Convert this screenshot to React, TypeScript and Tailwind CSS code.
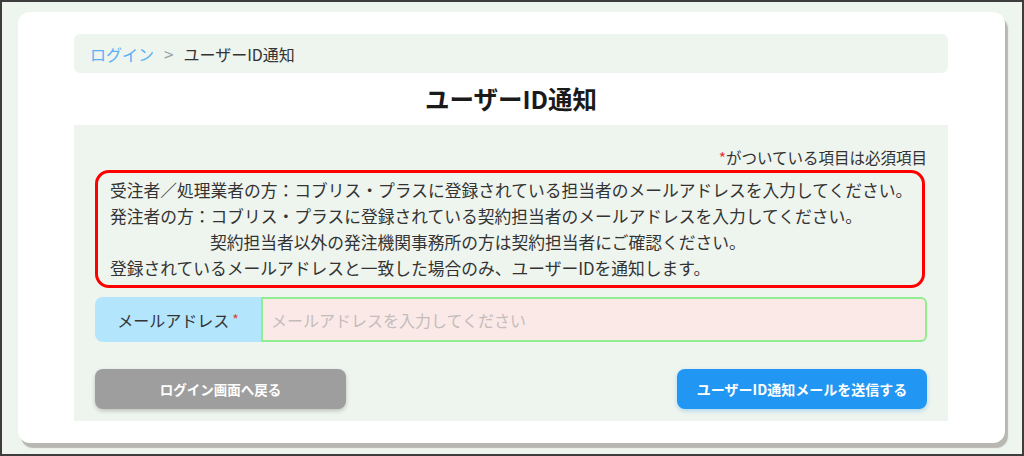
export default function App() {
  const font = { fontFamily: '"Noto Sans CJK JP", "Noto Sans", sans-serif' };

  return (
    <div
      className="w-[1024px] h-[456px] bg-[#eef4ee] border-2 border-[#3d3d3d] pt-[10px] pl-[16px] overflow-hidden"
      style={font}
    >
      {/* Card */}
      <div className="w-[987px] h-[431px] bg-white rounded-[12px] shadow-[3px_5px_1px_rgba(150,142,138,0.6)] pt-[22px] pl-[56px]">
        {/* Breadcrumb */}
        <div className="w-[874px] h-[39px] bg-[#eef4ee] rounded-[6px] flex items-center pl-[16px] text-[16px] text-[#333]">
          <span className="text-[#5ab0f5]">ログイン</span>
          <span className="text-[#9aa3aa] mx-[10px] text-[17px]">&gt;</span>
          <span>ユーザーID通知</span>
        </div>

        {/* Title */}
        <div className="w-[874px] h-[52px] flex items-center justify-center">
          <h1 className="text-[24.5px] font-bold text-[#1a1a1a]">ユーザーID通知</h1>
        </div>

        {/* Form section */}
        <div className="w-[874px] bg-[#eef4ee] pt-[22px] pb-[12px] pl-[21px] pr-[21px]">
          <p className="text-[15.5px] leading-[20px] text-[#333] text-right">
            <span className="text-[#e53935]">*</span>がついている項目は必須項目
          </p>

          <div className="mt-[3px] mr-[2px] border-[3px] border-[#ff0000] rounded-[14px] py-[4px] pl-[12px] text-[16.75px] leading-[26px] text-[#333]">
            <p>受注者／処理業者の方：コブリス・プラスに登録されている担当者のメールアドレスを入力してください。</p>
            <p>発注者の方：コブリス・プラスに登録されている契約担当者のメールアドレスを入力してください。</p>
            <p className="pl-[100px]">契約担当者以外の発注機関事務所の方は契約担当者にご確認ください。</p>
            <p>登録されているメールアドレスと一致した場合のみ、ユーザーIDを通知します。</p>
          </div>

          {/* Email input */}
          <div className="mt-[9px] flex h-[45px]">
            <div className="w-[166px] bg-[#b3e5fc] rounded-l-[8px] flex items-center justify-center text-[16px] text-[#333]">
              メールアドレス<span className="text-[#e53935] ml-[3px] text-[14px]">*</span>
            </div>
            <div className="flex-1 bg-[#fbe9e7] border-2 border-[#90ee90] rounded-r-[6px] flex items-center pl-[8px] text-[16px] text-[#c4bcbb]">
              メールアドレスを入力してください
            </div>
          </div>

          {/* Buttons */}
          <div className="mt-[27px] flex justify-between">
            <button className="w-[251px] h-[40px] bg-[#9e9e9e] rounded-[8px] text-white font-bold text-[13.5px] shadow-[0_2px_4px_rgba(0,0,0,0.2)]">
              ログイン画面へ戻る
            </button>
            <button className="w-[250px] h-[40px] bg-[#2196f3] rounded-[8px] text-white font-bold text-[14px] shadow-[0_2px_4px_rgba(33,150,243,0.3)]">
              ユーザーID通知メールを送信する
            </button>
          </div>
        </div>
      </div>
    </div>
  );
}
